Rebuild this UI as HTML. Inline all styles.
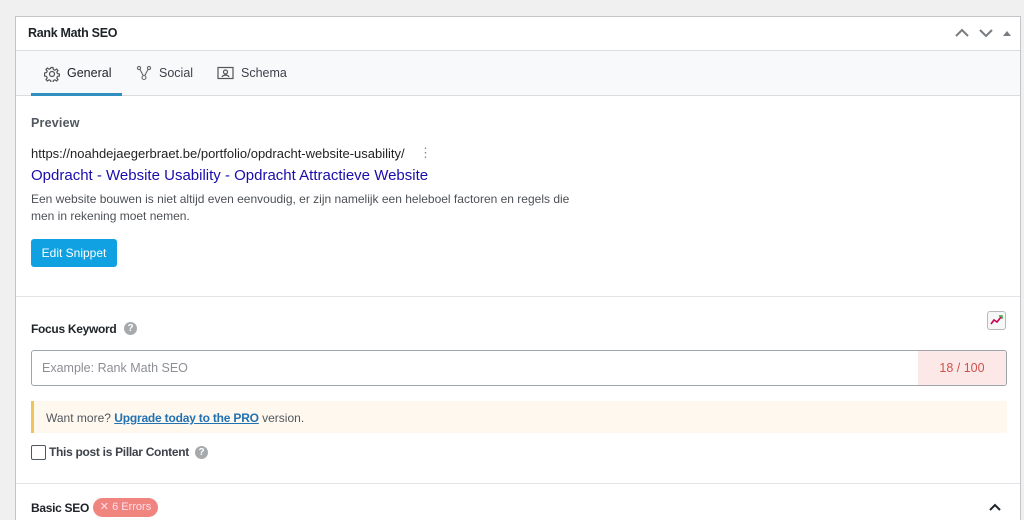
<!DOCTYPE html>
<html><head><style>
html,body{margin:0;width:1024px;height:520px;overflow:hidden}
body{background:#f0f0f1;font-family:"Liberation Sans",sans-serif;position:relative}
.a{position:absolute}
.p{left:15px;top:16px;width:1006px;height:504px;background:#fff;border:1px solid #c3c4c7;border-bottom:none;box-sizing:border-box}
.t{font-size:12.5px;color:#3c434a}
.b{font-weight:bold;letter-spacing:-0.3px}
</style></head><body>
<div class="a p"></div>
<div class="a b" style="left:28px;top:26px;font-size:12.5px;color:#1d2327">Rank Math SEO</div>
<svg class="a" style="left:953px;top:26px" width="60" height="14" viewBox="0 0 60 14"><path d="M3 10 L9 4 L15 10" stroke="#787c82" stroke-width="2" fill="none"/><path d="M27 4 L33 10 L39 4" stroke="#787c82" stroke-width="2" fill="none"/><path d="M50 10 L54 5 L58 10Z" fill="#787c82"/></svg>
<div class="a" style="left:16px;top:50px;width:1004px;height:46px;background:#f8f9fa;border-top:1px solid #dcdcde;border-bottom:1px solid #dcdcde;box-sizing:border-box"></div>
<div class="a" style="left:31px;top:93px;width:91px;height:3px;background:#2f8fbf"></div>
<svg class="a" style="left:44px;top:66px" width="16" height="16" viewBox="0 0 16 16" fill="none" stroke="#555" stroke-width="1.2"><circle cx="8" cy="8" r="2.5"/><path d="M7 1.5h2l.4 2 1.5.7 1.7-1.2 1.4 1.4-1.2 1.7.7 1.5 2 .4v2l-2 .4-.7 1.5 1.2 1.7-1.4 1.4-1.7-1.2-1.5.7-.4 2H7l-.4-2-1.5-.7-1.7 1.2-1.4-1.4 1.2-1.7-.7-1.5-2-.4V7l2-.4.7-1.5-1.2-1.7 1.4-1.4 1.7 1.2 1.5-.7z"/></svg>
<div class="a t" style="left:67px;top:66px;color:#1d2327">General</div>
<svg class="a" style="left:136px;top:65px" width="16" height="16" viewBox="0 0 16 16" fill="none" stroke="#666" stroke-width="1.1"><circle cx="3" cy="3" r="1.6"/><circle cx="13" cy="3" r="1.6"/><circle cx="8" cy="12.5" r="2"/><path d="M4 4.5 7.3 10.6M12 4.5 8.7 10.6"/></svg>
<div class="a t" style="left:159px;top:66px">Social</div>
<svg class="a" style="left:217px;top:66px" width="17" height="15" viewBox="0 0 17 15" fill="none" stroke="#555" stroke-width="1.2"><rect x="1" y="1.5" width="15" height="11"/><circle cx="8.5" cy="6" r="2"/><path d="M5 11c1-2.5 6-2.5 7 0"/></svg>
<div class="a t" style="left:241px;top:66px">Schema</div>
<div class="a" style="left:31px;top:116px;font-size:12.5px;font-weight:bold;color:#50575e;letter-spacing:.2px">Preview</div>
<div class="a" style="left:31px;top:146px;font-size:13px;color:#222">https://noahdejaegerbraet.be/portfolio/opdracht-website-usability/</div>
<div class="a" style="left:419px;top:145px;font-size:13px;color:#888">⋮</div>
<div class="a" style="left:31px;top:167px;font-size:15px;color:#1a0dab">Opdracht - Website Usability - Opdracht Attractieve Website</div>
<div class="a" style="left:31px;top:191px;width:560px;font-size:12px;line-height:17px;color:#4d5156">Een website bouwen is niet altijd even eenvoudig, er zijn namelijk een heleboel factoren en regels die men in rekening moet nemen.</div>
<div class="a" style="left:31px;top:239px;width:86px;height:28px;background:#10a1e2;border-radius:3px;color:#fff;font-size:12px;line-height:28px;text-align:center">Edit Snippet</div>
<div class="a" style="left:16px;top:296px;width:1004px;height:1px;background:#e2e4e7"></div>
<div class="a b" style="left:31px;top:322px;font-size:12px;color:#1d2327">Focus Keyword</div>
<div class="a" style="left:124px;top:322px;width:13px;height:13px;border-radius:50%;background:#a7aaad;color:#fff;font-size:10px;line-height:13px;text-align:center;font-weight:bold">?</div>
<div class="a" style="left:987px;top:311px;width:19px;height:19px;border:1px solid #b5b9bd;border-radius:3px;background:#f6f7f7;box-sizing:border-box"><svg width="17" height="17" viewBox="0 0 17 17"><path d="M3 12 L6 8 L9 10 L13 5" stroke="#c05" stroke-width="1.6" fill="none"/><path d="M11 4h3v3" stroke="#3a3" stroke-width="1.5" fill="none"/></svg></div>
<div class="a" style="left:31px;top:350px;width:976px;height:36px;border:1px solid #a0a5aa;border-radius:3px;box-sizing:border-box;overflow:hidden"><div class="a" style="right:0;top:0;width:88px;height:34px;background:#fde8e8;color:#d0524a;font-size:12.5px;line-height:34px;text-align:center">18 / 100</div><div class="a" style="left:10px;top:10px;font-size:12.5px;color:#8c8f94">Example: Rank Math SEO</div></div>
<div class="a" style="left:31px;top:401px;width:976px;height:32px;background:#fff8ef;border-left:3px solid #efc55a;box-sizing:border-box"></div>
<div class="a" style="left:46px;top:411px;font-size:12px;color:#50575e">Want more? <span style="color:#2271b1;text-decoration:underline;font-weight:bold;letter-spacing:-0.2px">Upgrade today to the PRO</span> version.</div>
<div class="a" style="left:31px;top:445px;width:15px;height:15px;border:1px solid #50575e;border-radius:2px;box-sizing:border-box;background:#fff"></div>
<div class="a b" style="left:49px;top:445px;font-size:12px;color:#3c434a">This post is Pillar Content</div>
<div class="a" style="left:195px;top:446px;width:13px;height:13px;border-radius:50%;background:#a7aaad;color:#fff;font-size:10px;line-height:13px;text-align:center;font-weight:bold">?</div>
<div class="a" style="left:16px;top:483px;width:1004px;height:1px;background:#e2e4e7"></div>
<div class="a b" style="left:31px;top:501px;font-size:12px;color:#1d2327">Basic SEO</div>
<div class="a" style="left:93px;top:498px;width:65px;height:19px;border-radius:10px;background:#f0857f;color:#fde;font-size:11px;line-height:19px;text-align:center">✕ 6 Errors</div>
<svg class="a" style="left:988px;top:502px" width="14" height="10" viewBox="0 0 14 10"><path d="M2 8 L7 3 L12 8" stroke="#1d2327" stroke-width="2" fill="none"/></svg>
</body></html>
